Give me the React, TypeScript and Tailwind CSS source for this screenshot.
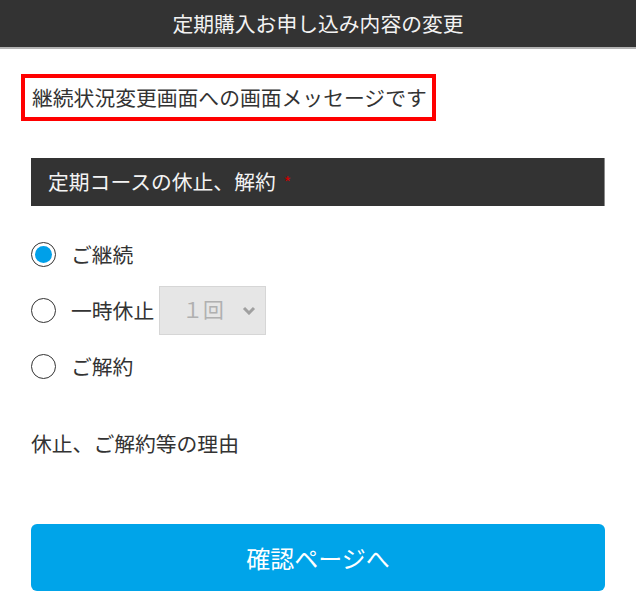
import { useState } from 'react';

const font = { fontFamily: '"Noto Sans CJK JP", "Noto Sans", sans-serif' };

type Choice = 'continue' | 'pause' | 'cancel';

function Radio({ checked }: { checked: boolean }) {
  return (
    <span className="flex h-[25px] w-[25px] shrink-0 items-center justify-center rounded-full border-[1.5px] border-[#333] bg-white">
      {checked && <span className="h-[17px] w-[17px] rounded-full bg-[#00a0e9]" />}
    </span>
  );
}

export default function App() {
  const [choice, setChoice] = useState<Choice>('continue');

  const options: Array<{ id: Choice; label: string }> = [
    { id: 'continue', label: 'ご継続' },
    { id: 'pause', label: '一時休止' },
    { id: 'cancel', label: 'ご解約' },
  ];

  return (
    <div className="min-h-screen bg-white text-[#333]" style={font}>
      {/* Title bar */}
      <header className="flex h-[49px] items-center justify-center border-b-2 border-[#b3b3b3] bg-[#333]">
        <h1 className="text-[20.8px] leading-none text-[#f2f2f2]">定期購入お申し込み内容の変更</h1>
      </header>

      <main className="px-[31px]">
        {/* Message */}
        <div className="-ml-[10px] mt-[25px] inline-block border-4 border-[#ff0000] py-[4px] pl-[7px] pr-[5px] text-[20.8px] leading-[31px] whitespace-nowrap">
          継続状況変更画面への画面メッセージです
        </div>

        {/* Section heading */}
        <div className="mt-[37px] flex h-[48px] items-center border-r border-[#8a8a8a] bg-[#333] pl-[17px] text-[20.8px] text-[#f3f3f3]">
          定期コースの休止、解約
          <span className="ml-[8px] text-[16px] text-[#cc0000]">*</span>
        </div>

        {/* Options */}
        <div className="mt-[20px] flex flex-col">
          {options.map((opt) => (
            <div key={opt.id} className="flex h-[56px] items-center">
              <button
                type="button"
                onClick={() => setChoice(opt.id)}
                className="flex items-center gap-[15px] text-[20.8px] leading-none"
              >
                <Radio checked={choice === opt.id} />
                <span>{opt.label}</span>
              </button>
              {opt.id === 'pause' && (
                <div className="ml-[5px] flex h-[49px] w-[107px] items-center border border-[#d6d6d6] bg-[#e6e6e6] pl-[22px] pr-[8px] text-[20.8px] text-[#b0b0b0]">
                  <span className="flex-1">１回</span>
                  <svg width="14" height="9" viewBox="0 0 14 9" className="mr-[1px]">
                    <polyline points="2,2 7,7 12,2" fill="none" stroke="#a0a0a0" strokeWidth="3" />
                  </svg>
                </div>
              )}
            </div>
          ))}
        </div>

        <p className="mt-[34px] text-[20.8px] leading-[31px]">休止、ご解約等の理由</p>

        <button
          type="button"
          className="mt-[65px] flex h-[67px] w-full items-center justify-center rounded-[6px] bg-[#00a4e9] text-[24px] text-white"
        >
          確認ページへ
        </button>
      </main>
    </div>
  );
}
